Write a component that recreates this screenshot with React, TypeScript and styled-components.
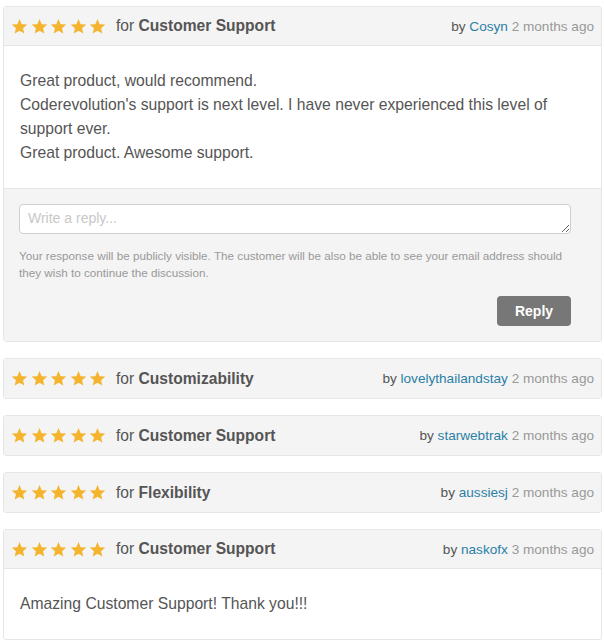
import styled, { createGlobalStyle } from 'styled-components';

const GlobalStyle = createGlobalStyle`
    body {
        margin: 0;
        background: #fff;
        font-family: "Liberation Sans", Arial, sans-serif;
        color: #555;
    }
`;

type Review = {
    topic: string;
    author: string;
    age: string;
    body?: string[];
    withReply?: boolean;
};

const reviews: Review[] = [
    {
        topic: 'Customer Support',
        author: 'Cosyn',
        age: '2 months ago',
        body: [
            'Great product, would recommend.',
            "Coderevolution's support is next level. I have never experienced this level of support ever.",
            'Great product. Awesome support.'
        ],
        withReply: true
    },
    { topic: 'Customizability', author: 'lovelythailandstay', age: '2 months ago' },
    { topic: 'Customer Support', author: 'starwebtrak', age: '2 months ago' },
    { topic: 'Flexibility', author: 'aussiesj', age: '2 months ago' },
    {
        topic: 'Customer Support',
        author: 'naskofx',
        age: '3 months ago',
        body: ['Amazing Customer Support! Thank you!!!']
    }
];

const StyledList = styled.div`
    display: flex;
    flex-direction: column;
    gap: 16px;
    padding: 6px 0 0 3px;
    width: 599px;
`;

const StyledCard = styled.div`
    border: 1px solid #e6e6e6;
    border-radius: 3px;
    overflow: hidden;
    background: #fff;
`;

const StyledHeader = styled.div<{ $open: boolean }>`
    display: flex;
    align-items: center;
    justify-content: space-between;
    box-sizing: border-box;
    height: 39px;
    padding: 0 7px 0 7px;
    background: #f4f4f4;
    border-bottom: ${({ $open }) => ($open ? '1px solid #e6e6e6' : 'none')};
`;

const StyledTitle = styled.div`
    display: flex;
    align-items: center;
    gap: 10px;
    font-size: 15.6px;
    color: #555;

    b {
        color: #555;
    }
`;

const StyledStars = styled.div`
    display: flex;
    gap: 2.5px;
`;

const StyledMeta = styled.div`
    font-size: 13.6px;
    color: #555;

    a {
        color: #2b7fa6;
        text-decoration: none;
    }

    span {
        color: #999;
    }
`;

const StyledBody = styled.div`
    padding: 23px 16px 23px;
    font-size: 15.7px;
    line-height: 24px;
    color: #555;

    p {
        margin: 0;
    }
`;

const StyledReplyArea = styled.div`
    background: #f4f4f4;
    border-top: 1px solid #e6e6e6;
    padding: 15px 30px 15px 15px;
    display: flex;
    flex-direction: column;
`;

const StyledTextarea = styled.textarea`
    height: 30px;
    box-sizing: border-box;
    border: 1px solid #cfcfcf;
    border-radius: 4px;
    padding: 5px 8px;
    font-family: "Liberation Sans", Arial, sans-serif;
    font-size: 14px;
    color: #555;
    resize: vertical;
    outline: none;

    &::placeholder {
        color: #c8c8c8;
    }
`;

const StyledNote = styled.p`
    margin: 13px -10px 15px 0;
    font-size: 11.7px;
    line-height: 17px;
    color: #999;
`;

const StyledReplyButton = styled.button`
    align-self: flex-end;
    width: 74px;
    height: 30px;
    border: none;
    border-radius: 4px;
    background: #777;
    color: #fff;
    font-family: "Liberation Sans", Arial, sans-serif;
    font-size: 14px;
    font-weight: bold;
    cursor: pointer;
`;

const Star = () => (
    <svg width="17" height="17" viewBox="0 0 24 24">
        <path
            d="M12 1.5l3.1 7.2 7.8.6-5.9 5.1 1.8 7.6L12 17.9 5.2 22l1.8-7.6-5.9-5.1 7.8-.6z"
            fill="#f4b42e"
        />
    </svg>
);

const ReviewCard = ({ topic, author, age, body, withReply }: Review) => (
    <StyledCard>
        <StyledHeader $open={!!body}>
            <StyledTitle>
                <StyledStars>
                    {[0, 1, 2, 3, 4].map((i) => (
                        <Star key={i} />
                    ))}
                </StyledStars>
                <span>
                    for <b>{topic}</b>
                </span>
            </StyledTitle>
            <StyledMeta>
                by <a href="#">{author}</a> <span>{age}</span>
            </StyledMeta>
        </StyledHeader>
        {body && (
            <StyledBody>
                {body.map((line) => (
                    <p key={line}>{line}</p>
                ))}
            </StyledBody>
        )}
        {withReply && (
            <StyledReplyArea>
                <StyledTextarea placeholder="Write a reply..." />
                <StyledNote>
                    Your response will be publicly visible. The customer will be also be able
                    to see your email address should they wish to continue the discussion.
                </StyledNote>
                <StyledReplyButton>Reply</StyledReplyButton>
            </StyledReplyArea>
        )}
    </StyledCard>
);

export default function App() {
    return (
        <>
            <GlobalStyle />
            <StyledList>
                {reviews.map((review, i) => (
                    <ReviewCard key={i} {...review} />
                ))}
            </StyledList>
        </>
    );
}
